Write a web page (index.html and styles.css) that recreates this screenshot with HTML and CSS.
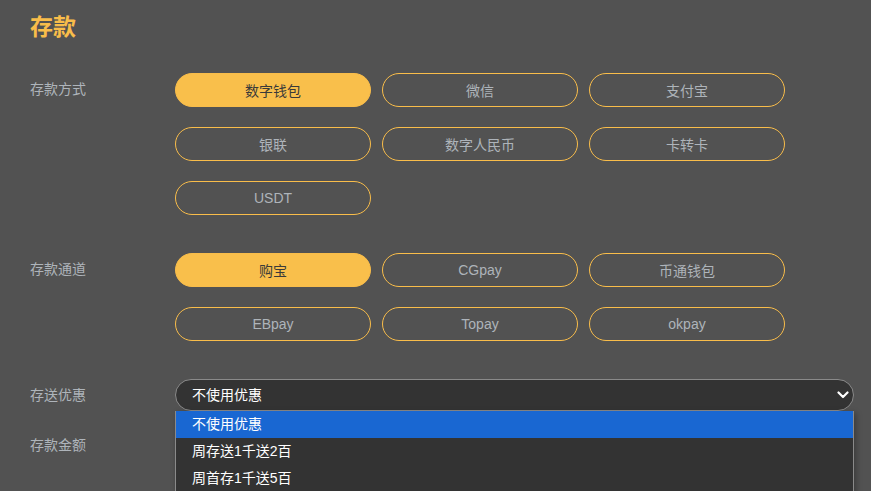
FILE: index.html
```html
<!DOCTYPE html>
<html lang="zh-CN">

<head>
    <meta charset="UTF-8">
    <meta name="viewport" content="width=device-width, initial-scale=1.0">
    <title>存款</title>
    <link rel="stylesheet" href="styles.css">
</head>

<body>
    <!-- Deposit page -->
    <div class="deposit-page">
        <h1 class="page-title">存款</h1>

        <div class="form-row">
            <div class="row-label">存款方式</div>
            <div class="option-grid">
                <button class="option active">数字钱包</button>
                <button class="option">微信</button>
                <button class="option">支付宝</button>
                <button class="option">银联</button>
                <button class="option">数字人民币</button>
                <button class="option">卡转卡</button>
                <button class="option">USDT</button>
            </div>
        </div>

        <div class="form-row">
            <div class="row-label">存款通道</div>
            <div class="option-grid">
                <button class="option active">购宝</button>
                <button class="option">CGpay</button>
                <button class="option">币通钱包</button>
                <button class="option">EBpay</button>
                <button class="option">Topay</button>
                <button class="option">okpay</button>
            </div>
        </div>

        <div class="form-row select-row">
            <div class="row-label">存送优惠</div>
            <div class="select-wrap">
                <select class="promo-select">
                    <option>不使用优惠</option>
                    <option>周存送1千送2百</option>
                    <option>周首存1千送5百</option>
                </select>
                <svg class="select-arrow" width="12" height="8" viewBox="0 0 12 8">
                    <path d="M1.5 1.5 L6 6 L10.5 1.5" fill="none" stroke="#fff" stroke-width="2.2" stroke-linecap="round" stroke-linejoin="round"/>
                </svg>
                <!-- open dropdown list -->
                <ul class="select-list">
                    <li class="selected">不使用优惠</li>
                    <li>周存送1千送2百</li>
                    <li>周首存1千送5百</li>
                </ul>
            </div>
        </div>

        <div class="form-row amount-row">
            <div class="row-label">存款金额</div>
        </div>
    </div>
</body>

</html>
```

FILE: styles.css
```css
/* styles.css */
* {
    margin: 0;
    padding: 0;
    box-sizing: border-box;
}

body {
    font-family: "Liberation Sans", "Noto Sans CJK SC", sans-serif;
    background-color: #525252;
    color: #aeb4ba;
    font-size: 14px;
    overflow: hidden;
}

.deposit-page {
    padding: 12px 17px 0 30px;
}

.page-title {
    color: #f9bd4a;
    font-size: 23px;
    font-weight: bold;
    line-height: 30px;
    margin-bottom: 31px;
}

.form-row {
    display: flex;
    align-items: flex-start;
    margin-bottom: 38px;
}

.row-label {
    width: 145px;
    flex-shrink: 0;
    line-height: 32px;
}

.option-grid {
    display: grid;
    grid-template-columns: repeat(3, 196px);
    gap: 20px 11px;
}

.option {
    height: 34px;
    border: 1px solid #f9bd4a;
    border-radius: 17px;
    background: transparent;
    color: #aeb4ba;
    font-family: "Liberation Sans", "Noto Sans CJK SC", sans-serif;
    font-size: 14px;
    cursor: pointer;
}

.option.active {
    background-color: #f9bf4b;
    color: #3a3a3a;
}

.select-row {
    margin-bottom: 17px;
}

.select-wrap {
    position: relative;
    flex-grow: 1;
}

.promo-select {
    width: 100%;
    height: 32px;
    padding: 0 30px 0 16px;
    border: 1px solid #8a8a8a;
    border-radius: 16px;
    background-color: #333;
    color: #fff;
    font-family: "Liberation Sans", "Noto Sans CJK SC", sans-serif;
    font-size: 14px;
    appearance: none;
    -webkit-appearance: none;
    outline: none;
}

.select-arrow {
    position: absolute;
    right: 5px;
    top: 12px;
    pointer-events: none;
}

.select-list {
    position: absolute;
    top: 32px;
    left: 0;
    right: 0;
    list-style: none;
    background-color: #333;
    border: 1px solid #8a8a8a;
    border-top: none;
    box-shadow: 2px 2px 6px rgba(0, 0, 0, 0.3);
    z-index: 10;
}

.select-list li {
    height: 27px;
    line-height: 27px;
    padding-left: 16px;
    color: #fff;
}

.select-list li.selected {
    background-color: #1967d2;
}

.amount-row .row-label {
    line-height: 34px;
}
```
